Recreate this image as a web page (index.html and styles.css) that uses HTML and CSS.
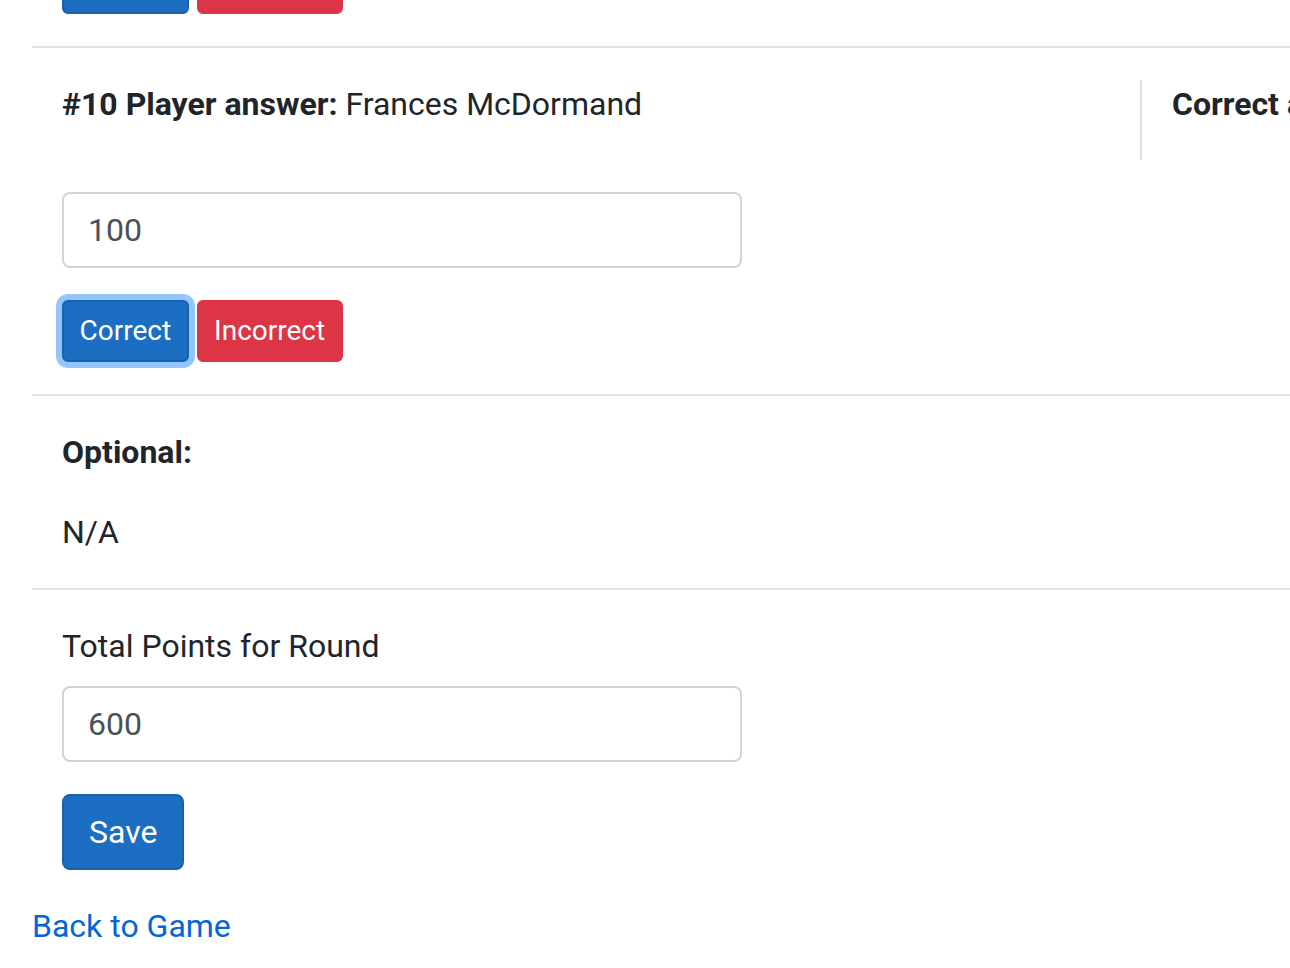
FILE: index.html
```html
<!DOCTYPE html>
<html lang="en">
<head>
<meta charset="utf-8">
<title>Grade Round</title>
<link rel="stylesheet" href="styles.css">
</head>
<body>
<div class="page">
  <div class="section">
    <div class="btn-row">
      <button class="btn btn-sm btn-primary">Correct</button>
      <button class="btn btn-sm btn-danger">Incorrect</button>
    </div>
  </div>
  <hr class="rule">
  <div class="section">
    <div class="answer-row">
      <div class="col-left">
        <p class="line"><strong>#10 Player answer:</strong> Frances McDormand</p>
        <div class="form-group spaced">
          <input class="form-control" type="text" value="100">
        </div>
        <div class="btn-row">
          <button class="btn btn-sm btn-primary focused">Correct</button>
          <button class="btn btn-sm btn-danger">Incorrect</button>
        </div>
      </div>
      <div class="col-right">
        <p class="line"><strong>Correct answer:</strong> Frances McDormand</p>
      </div>
    </div>
  </div>
  <hr class="rule">
  <div class="section">
    <p class="line"><strong>Optional:</strong></p>
    <p class="line">N/A</p>
  </div>
  <hr class="rule">
  <div class="section">
    <label class="label">Total Points for Round</label>
    <div class="form-group">
      <input class="form-control" type="text" value="600">
    </div>
    <button class="btn btn-primary save">Save</button>
  </div>
  <div class="back">
    <a href="#" class="link">Back to Game</a>
  </div>
</div>
</body>
</html>
```
FILE: styles.css
```css
html, body {
  margin: 0;
  padding: 0;
  overflow: hidden;
  background: #fff;
}
body {
  font-family: Roboto, "Noto Sans", "Liberation Sans", sans-serif;
  font-size: 32px;
  line-height: 48px;
  color: #212529;
}
.page {
  width: 2400px;
  margin-top: -48px;
  padding-left: 32px;
}
.section {
  padding-left: 30px;
}
.rule {
  margin: 32px 0;
  border: 0;
  border-top: 2px solid #dee2e6;
  height: 0;
}
.line {
  margin: 0 0 32px 0;
}
.line strong {
  font-weight: 700;
}
.answer-row {
  display: flex;
  align-items: flex-start;
  margin-left: -30px;
}
.col-left {
  width: 1078px;
  padding-left: 30px;
  flex: none;
}
.col-right {
  border-left: 2px solid #dee2e6;
  padding-left: 30px;
  white-space: nowrap;
}
.spaced {
  margin-top: 64px;
}
.form-group {
  margin-bottom: 32px;
}
.form-control {
  display: block;
  box-sizing: border-box;
  width: 680px;
  height: 76px;
  padding: 12px 24px;
  font-family: inherit;
  font-size: 32px;
  line-height: 48px;
  color: #495057;
  background: #fff;
  border: 2px solid #ced4da;
  border-radius: 8px;
  outline: none;
}
.label {
  display: block;
  margin-bottom: 16px;
}
.btn-row {
  display: flex;
  gap: 8px;
}
.btn {
  display: inline-block;
  box-sizing: border-box;
  font-family: inherit;
  font-weight: 400;
  font-size: 32px;
  line-height: 48px;
  padding: 12px 24px;
  border: 2px solid transparent;
  border-radius: 8px;
  color: #fff;
  cursor: pointer;
}
.save {
  padding: 12px 25px;
}
.btn-sm {
  font-size: 28px;
  line-height: 42px;
  padding: 8px 15.5px;
  border-radius: 6px;
}
.btn-primary {
  background: #1b6ec2;
  border-color: #1861ac;
}
.btn-danger {
  background: #dc3545;
  border-color: #dc3545;
}
.focused {
  background: #1b6ec2;
  border-color: #1861ac;
  box-shadow: 0 0 0 6px #93c6fd;
}
.back {
  margin-top: 32px;
}
.link {
  color: #0366d6;
  text-decoration: none;
}
```
